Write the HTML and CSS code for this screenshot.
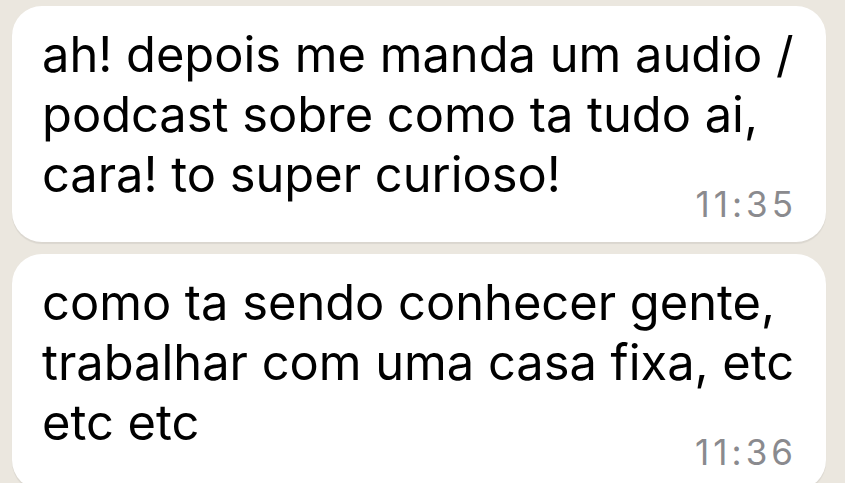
FILE: index.html
```html
<!DOCTYPE html>
<html>
<head>
    <meta name="viewport" content="width=device-width, initial-scale=1.0">
    <title>Conversa</title>
    <link rel="stylesheet" href="styles.css">
</head>
<body>
    <div class="chat">
        <div class="bubble">
            <p class="msg-text">ah! depois me manda um audio / podcast sobre como ta tudo ai, cara! to super curioso!</p>
            <div class="msg-meta"><span class="msg-time">11:35</span></div>
        </div>
        <div class="bubble">
            <p class="msg-text">como ta sendo conhecer gente, trabalhar com uma casa fixa, etc etc etc</p>
            <div class="msg-meta"><span class="msg-time">11:36</span></div>
        </div>
    </div>
</body>
</html>
```

FILE: styles.css
```css
:root {
    --wallpaper: #ebe7df;
    --bubble: #ffffff;
    --text-color: #000000;
    --time-color: #8a8a8e;
}

body {
    margin: 0;
    background-color: var(--wallpaper);
    font-family: Inter, 'Noto Sans', sans-serif;
    overflow: hidden;
}

.chat {
    display: flex;
    flex-direction: column;
    gap: 12px;
    padding: 6px 19px 0 12px;
}

.bubble {
    background: var(--bubble);
    border-radius: 30px;
    padding: 19px 29px 20px 30px;
    box-shadow: 0 2px 1px rgba(0, 0, 0, 0.07);
}

.msg-text {
    margin: 0;
    font-size: 48.8px;
    line-height: 60px;
    color: var(--text-color);
}

.msg-meta {
    display: flex;
    justify-content: flex-end;
    margin-top: -19px;
}

.msg-time {
    font-size: 35px;
    line-height: 36px;
    letter-spacing: 4px;
    color: var(--time-color);
}
```
